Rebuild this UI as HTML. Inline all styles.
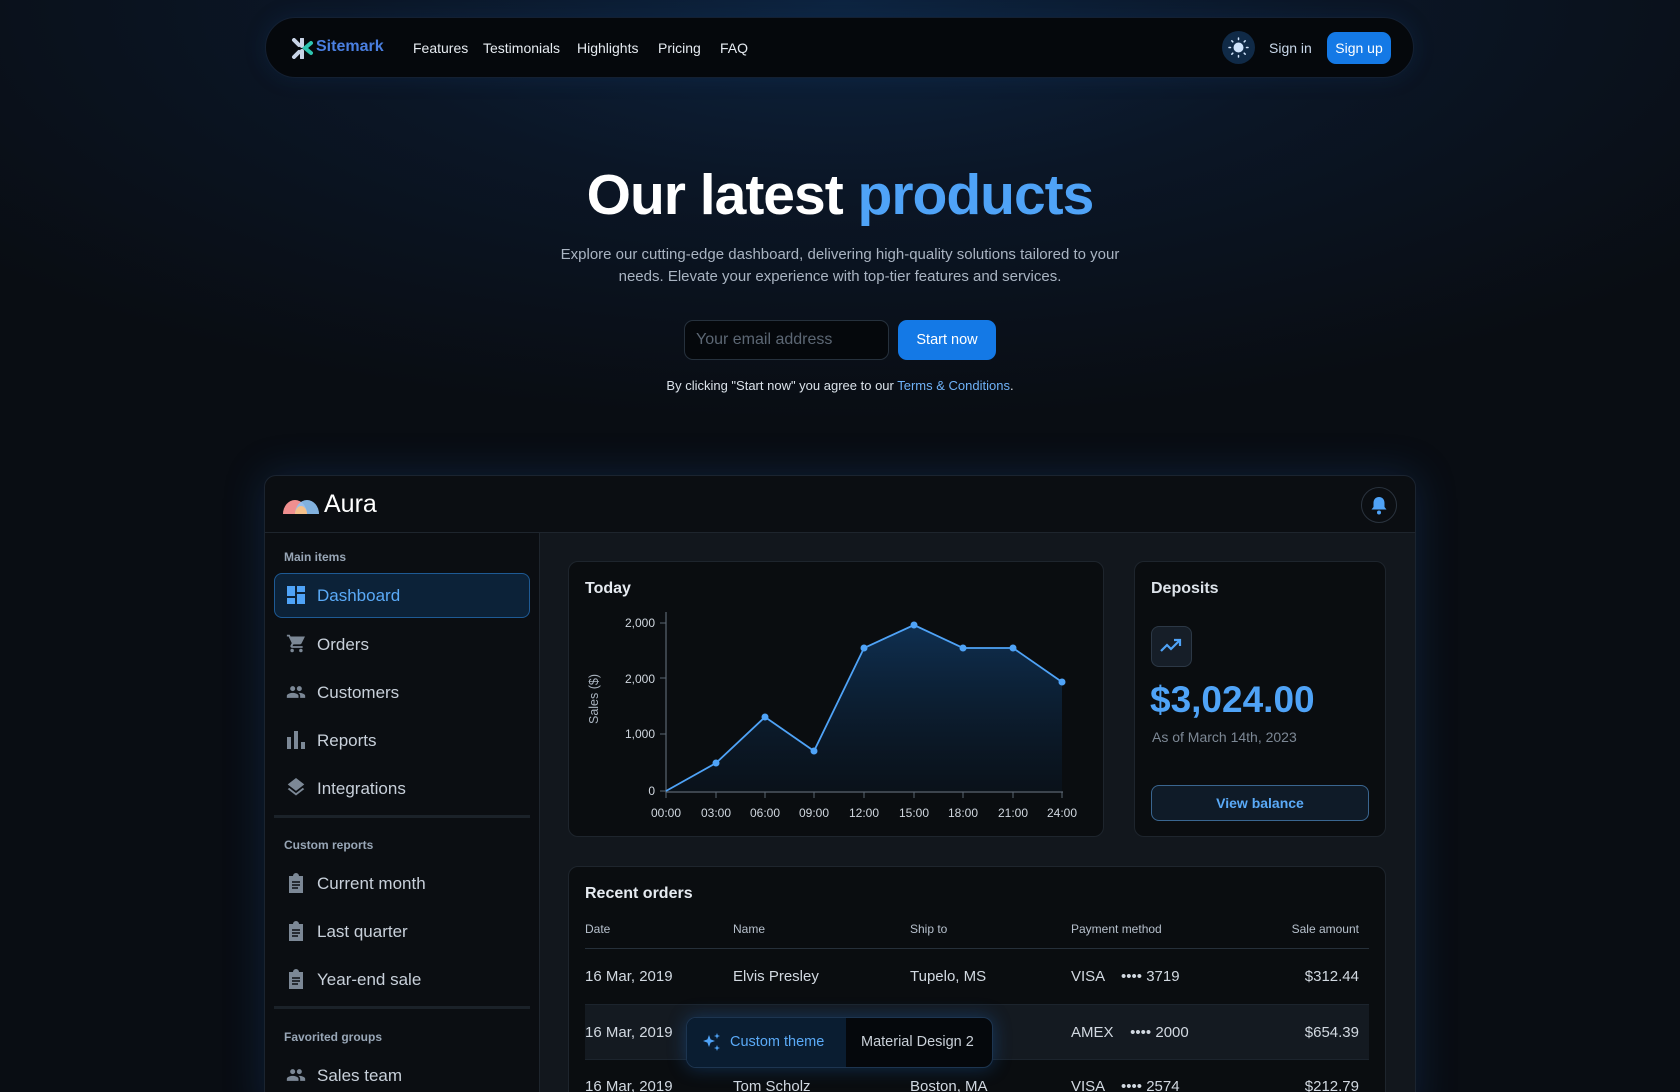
<!DOCTYPE html>
<html><head><meta charset="utf-8">
<style>
*{box-sizing:border-box;margin:0;padding:0}
html{width:1680px;height:1092px;overflow:hidden;background:#090d13}
body{width:1680px;height:1092px;overflow:hidden;font-family:"Liberation Sans",sans-serif;color:#e6ebf1;
background:radial-gradient(ellipse 1100px 420px at 840px 0,#0d2440 0%,#0b1626 45%,#090d13 100%),#090d13;position:relative}
.a{position:absolute}
.nav{left:265px;top:17px;width:1149px;height:61px;border-radius:31px;background:#05080c;border:1px solid #142032;box-shadow:0 0 20px rgba(20,60,110,.25)}
.panel{left:264px;top:475px;width:1152px;height:640px;border:1px solid #1b2430;border-radius:12px;background:#0b0e12;overflow:hidden;box-shadow:0 0 40px rgba(30,90,170,.25)}
.lbl{font-size:12px;font-weight:bold;color:#98a6b6}
.item{font-size:17px;color:#c8d0da}
.card{background:#0a0d10;border:1px solid #1e252d;border-radius:10px}
.th{font-size:12px;color:#b6c0cc}
.td{font-size:15px;color:#d2d9e1}
</style></head><body>
<div class="a nav"></div>
<svg class="a" style="left:291px;top:38px" width="22" height="21" viewBox="0 0 22 21"><path d="M3 2l5 5M3 19l5-5M11 1v7M11 13v7" stroke="#c8d4e6" stroke-width="4" stroke-linecap="round"/><path d="M20 5l-6 5 6 5" stroke="#2ec4b0" stroke-width="4" fill="none" stroke-linecap="round"/></svg>
<div class="a" style="left:316px;top:38px;font-size:16px;font-weight:bold;color:#4a7fe0">Sitemark</div>
<div class="a" style="left:413px;top:40px;font-size:14px">Features</div>
<div class="a" style="left:483px;top:40px;font-size:14px">Testimonials</div>
<div class="a" style="left:577px;top:40px;font-size:14px">Highlights</div>
<div class="a" style="left:658px;top:40px;font-size:14px">Pricing</div>
<div class="a" style="left:720px;top:40px;font-size:14px">FAQ</div>
<div class="a" style="left:1222px;top:31px;width:33px;height:33px;border-radius:50%;background:#102a47"></div>
<svg class="a" style="left:1228px;top:37px" width="21" height="21" viewBox="0 0 21 21"><circle cx="10.5" cy="10.5" r="5" fill="#cfe3fb"/><g stroke="#cfe3fb" stroke-width="1.5" stroke-linecap="round"><path d="M10.5 1v1.5M10.5 18.5v1.5M1 10.5h1.5M18.5 10.5h1.5M3.8 3.8l1 1M16.2 16.2l1 1M3.8 17.2l1-1M16.2 4.8l1-1"/></g></svg>
<div class="a" style="left:1269px;top:40px;font-size:14px;color:#c9d8ea">Sign in</div>
<div class="a" style="left:1327px;top:32px;width:64px;height:32px;border-radius:9px;background:#1479e6;color:#fff;font-size:14px;text-align:center;line-height:32px">Sign up</div>

<div class="a" style="left:0;width:1680px;top:162px;text-align:center;font-size:57px;font-weight:bold;letter-spacing:-1px;color:#fff">Our latest <span style="color:#4fa3f7">products</span></div>
<div class="a" style="left:545px;width:590px;top:244px;text-align:center;font-size:15px;line-height:22px;color:#a9b4c2">Explore our cutting-edge dashboard, delivering high-quality solutions tailored to your needs. Elevate your experience with top-tier features and services.</div>
<div class="a" style="left:684px;top:320px;width:205px;height:40px;border:1px solid #26313d;border-radius:9px;background:#05080c;color:#5c6774;font-size:16px;line-height:38px;padding-left:11px">Your email address</div>
<div class="a" style="left:898px;top:320px;width:98px;height:40px;border-radius:9px;background:#1479e6;color:#fff;font-size:14.5px;line-height:40px;text-align:center">Start now</div>
<div class="a" style="left:0;width:1680px;top:378px;text-align:center;font-size:13px;color:#dbe2ea">By clicking "Start now" you agree to our <span style="color:#6fb2f8">Terms &amp; Conditions</span>.</div>

<div class="a panel">
 <div class="a" style="left:0;top:0;width:1152px;height:57px;border-bottom:1px solid #1e252d"></div>
 <svg class="a" style="left:18px;top:20px" width="38" height="18" viewBox="0 0 38 18"><path d="M0 18A12 14 0 0 1 24 18z" fill="#f08f8f"/><path d="M12 18A12 14 0 0 1 36 18z" fill="#8ec3f5" opacity=".9"/><path d="M12 18A6 8 0 0 1 24 18z" fill="#f5c08a"/></svg>
 <div class="a" style="left:59px;top:14px;font-size:25px;color:#fff">Aura</div>
 <div class="a" style="left:1096px;top:11px;width:36px;height:36px;border-radius:50%;border:1px solid #2a333e"></div>
 <svg class="a" style="left:1105px;top:19px" width="18" height="20" viewBox="0 0 18 20"><path d="M9 2c3.5 0 5.5 2.5 5.5 6v4l2 2.5H1.5l2-2.5V8C3.5 4.5 5.5 2 9 2z" fill="#4fa3f7"/><circle cx="9" cy="17.5" r="2" fill="#4fa3f7"/></svg>
 <div class="a" style="left:274px;top:57px;width:878px;height:600px;background:#12171d;border-left:1px solid #1e252d"></div>
</div>

<div class="a lbl" style="left:284px;top:550px">Main items</div>
<div class="a" style="left:274px;top:573px;width:256px;height:45px;border:1px solid #1e5a94;border-radius:8px;background:#0c2238"></div>
<svg class="a" style="left:287px;top:586px" width="18" height="18" viewBox="0 0 18 18" fill="#4fa3f7"><rect x="0" y="0" width="8" height="10"/><rect x="10" y="0" width="8" height="6"/><rect x="0" y="12" width="8" height="6"/><rect x="10" y="8" width="8" height="10"/></svg>
<div class="a item" style="left:317px;top:586px;color:#5aaaf7">Dashboard</div>
<svg class="a" style="left:286px;top:633px" width="21" height="21" viewBox="0 0 24 24" fill="#7c8896"><path d="M7 18a2 2 0 1 0 0 4 2 2 0 0 0 0-4zM1 2v2h2l3.6 7.6-1.35 2.4A2 2 0 0 0 7 17h12v-2H7.4l1.1-2h7.45a2 2 0 0 0 1.75-1.03L21.7 4H5.2l-.94-2H1zm16 16a2 2 0 1 0 0 4 2 2 0 0 0 0-4z"/></svg>
<div class="a item" style="left:317px;top:635px">Orders</div>
<svg class="a" style="left:285px;top:682px" width="22" height="20" viewBox="0 0 24 24" fill="#7c8896"><path d="M16 11a3 3 0 1 0 0-6 3 3 0 0 0 0 6zm-8 0a3 3 0 1 0 0-6 3 3 0 0 0 0 6zm0 2c-2.3 0-7 1.2-7 3.5V19h14v-2.5C15 14.2 10.3 13 8 13zm8 0c-.3 0-.6 0-1 .05 1.2.84 2 2 2 3.45V19h6v-2.5c0-2.3-4.7-3.5-7-3.5z"/></svg>
<div class="a item" style="left:317px;top:683px">Customers</div>
<svg class="a" style="left:287px;top:731px" width="18" height="18" viewBox="0 0 18 18" fill="#7c8896"><rect x="0" y="6" width="4" height="12"/><rect x="7" y="0" width="4" height="18"/><rect x="14" y="11" width="4" height="7"/></svg>
<div class="a item" style="left:317px;top:731px">Reports</div>
<svg class="a" style="left:285px;top:778px" width="22" height="22" viewBox="0 0 24 24" fill="#7c8896"><path d="M12 16.5l-7.4-5.7L3 12.1l9 7 9-7-1.6-1.3zM12 14l7.4-5.7L21 7l-9-7-9 7 1.6 1.3z"/></svg>
<div class="a item" style="left:317px;top:779px">Integrations</div>
<div class="a" style="left:274px;top:815px;width:256px;height:3px;background:#1b2229"></div>
<div class="a lbl" style="left:284px;top:838px">Custom reports</div>
<svg class="a" style="left:287px;top:873px" width="18" height="20" viewBox="0 0 18 20" fill="#7c8896"><path d="M2 3h4a3 3 0 0 1 6 0h4v17H2z"/><path d="M5 9h8M5 12h8M5 15h6" stroke="#0b0e12" stroke-width="1.5"/></svg>
<div class="a item" style="left:317px;top:874px">Current month</div>
<svg class="a" style="left:287px;top:921px" width="18" height="20" viewBox="0 0 18 20" fill="#7c8896"><path d="M2 3h4a3 3 0 0 1 6 0h4v17H2z"/><path d="M5 9h8M5 12h8M5 15h6" stroke="#0b0e12" stroke-width="1.5"/></svg>
<div class="a item" style="left:317px;top:922px">Last quarter</div>
<svg class="a" style="left:287px;top:969px" width="18" height="20" viewBox="0 0 18 20" fill="#7c8896"><path d="M2 3h4a3 3 0 0 1 6 0h4v17H2z"/><path d="M5 9h8M5 12h8M5 15h6" stroke="#0b0e12" stroke-width="1.5"/></svg>
<div class="a item" style="left:317px;top:970px">Year-end sale</div>
<div class="a" style="left:274px;top:1006px;width:256px;height:3px;background:#1b2229"></div>
<div class="a lbl" style="left:284px;top:1030px">Favorited groups</div>
<svg class="a" style="left:285px;top:1065px" width="22" height="20" viewBox="0 0 24 24" fill="#7c8896"><path d="M16 11a3 3 0 1 0 0-6 3 3 0 0 0 0 6zm-8 0a3 3 0 1 0 0-6 3 3 0 0 0 0 6zm0 2c-2.3 0-7 1.2-7 3.5V19h14v-2.5C15 14.2 10.3 13 8 13zm8 0c-.3 0-.6 0-1 .05 1.2.84 2 2 2 3.45V19h6v-2.5c0-2.3-4.7-3.5-7-3.5z"/></svg>
<div class="a item" style="left:317px;top:1066px">Sales team</div>

<div class="a card" style="left:568px;top:561px;width:536px;height:276px"></div>
<div class="a" style="left:585px;top:580px;font-size:16px;font-weight:bold;color:#e6ebf1">Today</div>
<svg class="a" style="left:568px;top:561px" width="536" height="276" viewBox="568 561 536 276" font-family="Liberation Sans, sans-serif">
<defs><linearGradient id="g" x1="0" y1="0" x2="0" y2="1"><stop offset="0" stop-color="#0f3358" stop-opacity=".9"/><stop offset="1" stop-color="#0a1624" stop-opacity=".5"/></linearGradient></defs>
<path d="M666 791L716 763L765 717L814 751L864 648L914 625L963 648L1013 648L1062 682L1062 791Z" fill="url(#g)"/>
<path d="M666 612V792H1063" stroke="#5b6672" stroke-width="1.2" fill="none"/>
<g stroke="#5b6672"><path d="M660 623h6M660 678h6M660 734h6M660 791h6M666 792v6M716 792v6M765 792v6M814 792v6M864 792v6M914 792v6M963 792v6M1013 792v6M1062 792v6"/></g>
<path d="M666 791L716 763L765 717L814 751L864 648L914 625L963 648L1013 648L1062 682" stroke="#4fa3f7" stroke-width="1.8" fill="none"/>
<g fill="#4fa3f7"><circle cx="716" cy="763" r="3.5"/><circle cx="765" cy="717" r="3.5"/><circle cx="814" cy="751" r="3.5"/><circle cx="864" cy="648" r="3.5"/><circle cx="914" cy="625" r="3.5"/><circle cx="963" cy="648" r="3.5"/><circle cx="1013" cy="648" r="3.5"/><circle cx="1062" cy="682" r="3.5"/></g>
<g fill="#d0d7df" font-size="12" text-anchor="end"><text x="655" y="627">2,000</text><text x="655" y="683">2,000</text><text x="655" y="738">1,000</text><text x="655" y="795">0</text></g>
<g fill="#d0d7df" font-size="12" text-anchor="middle"><text x="666" y="817">00:00</text><text x="716" y="817">03:00</text><text x="765" y="817">06:00</text><text x="814" y="817">09:00</text><text x="864" y="817">12:00</text><text x="914" y="817">15:00</text><text x="963" y="817">18:00</text><text x="1013" y="817">21:00</text><text x="1062" y="817">24:00</text></g>
<text transform="translate(598 699) rotate(-90)" fill="#aab4c0" font-size="12.5" text-anchor="middle">Sales ($)</text>
</svg>

<div class="a card" style="left:1134px;top:561px;width:252px;height:276px"></div>
<div class="a" style="left:1151px;top:580px;font-size:16px;font-weight:bold;color:#dde3ea">Deposits</div>
<div class="a" style="left:1151px;top:626px;width:41px;height:41px;border:1px solid #2c3846;border-radius:8px;background:#161e28"></div>
<svg class="a" style="left:1160px;top:637px" width="23" height="18" viewBox="0 0 23 18"><path d="M1 14l6-6 4 4 9-9M14 3h6v6" stroke="#4fa3f7" stroke-width="2.2" fill="none"/></svg>
<div class="a" style="left:1150px;top:679px;font-size:37px;font-weight:bold;color:#4fa3f7">$3,024.00</div>
<div class="a" style="left:1152px;top:729px;font-size:14px;color:#7d8895">As of March 14th, 2023</div>
<div class="a" style="left:1151px;top:785px;width:218px;height:36px;border:1px solid #3a6690;border-radius:8px;background:#0f1b28;color:#5aaaf7;font-size:14px;font-weight:bold;text-align:center;line-height:34px">View balance</div>

<div class="a card" style="left:568px;top:866px;width:818px;height:260px"></div>
<div class="a" style="left:585px;top:885px;font-size:16px;font-weight:bold;color:#e6ebf1">Recent orders</div>
<div class="a th" style="left:585px;top:922px">Date</div>
<div class="a th" style="left:733px;top:922px">Name</div>
<div class="a th" style="left:910px;top:922px">Ship to</div>
<div class="a th" style="left:1071px;top:922px">Payment method</div>
<div class="a th" style="left:1259px;top:922px;width:100px;text-align:right">Sale amount</div>
<div class="a" style="left:585px;top:948px;width:784px;height:1px;background:#26303a"></div>
<div class="a" style="left:585px;top:1004px;width:784px;height:56px;background:#141a21;border-top:1px solid #1c242d;border-bottom:1px solid #1c242d"></div>
<div class="a td" style="left:585px;top:968px">16 Mar, 2019</div>
<div class="a td" style="left:733px;top:968px">Elvis Presley</div>
<div class="a td" style="left:910px;top:968px">Tupelo, MS</div>
<div class="a td" style="left:1071px;top:968px">VISA &nbsp;&nbsp; •••• 3719</div>
<div class="a td" style="left:1259px;top:968px;width:100px;text-align:right">$312.44</div>
<div class="a td" style="left:585px;top:1024px">16 Mar, 2019</div>
<div class="a td" style="left:1071px;top:1024px">AMEX &nbsp;&nbsp; •••• 2000</div>
<div class="a td" style="left:1259px;top:1024px;width:100px;text-align:right">$654.39</div>
<div class="a td" style="left:585px;top:1078px">16 Mar, 2019</div>
<div class="a td" style="left:733px;top:1078px">Tom Scholz</div>
<div class="a td" style="left:910px;top:1078px">Boston, MA</div>
<div class="a td" style="left:1071px;top:1078px">VISA &nbsp;&nbsp; •••• 2574</div>
<div class="a td" style="left:1259px;top:1078px;width:100px;text-align:right">$212.79</div>

<div class="a" style="left:686px;top:1017px;width:307px;height:51px;border:1px solid #1d3550;border-radius:10px;background:#05080c;box-shadow:0 0 18px rgba(30,110,200,.35);overflow:hidden">
 <div class="a" style="left:0;top:0;width:159px;height:51px;background:#0a1d31"></div>
</div>
<svg class="a" style="left:702px;top:1032px" width="20" height="20" viewBox="0 0 20 20" fill="#4fa3f7"><path d="M7 3l1.6 4.4L13 9l-4.4 1.6L7 15l-1.6-4.4L1 9l4.4-1.6z"/><path d="M15 1l.8 2.2L18 4l-2.2.8L15 7l-.8-2.2L12 4l2.2-.8zM15 13l.8 2.2 2.2.8-2.2.8L15 19l-.8-2.2L12 16l2.2-.8z"/></svg>
<div class="a" style="left:730px;top:1034px;font-size:14.5px;color:#5aaaf7">Custom theme</div>
<div class="a" style="left:861px;top:1034px;font-size:14.5px;color:#c9d0d8">Material Design 2</div>
</body></html>
